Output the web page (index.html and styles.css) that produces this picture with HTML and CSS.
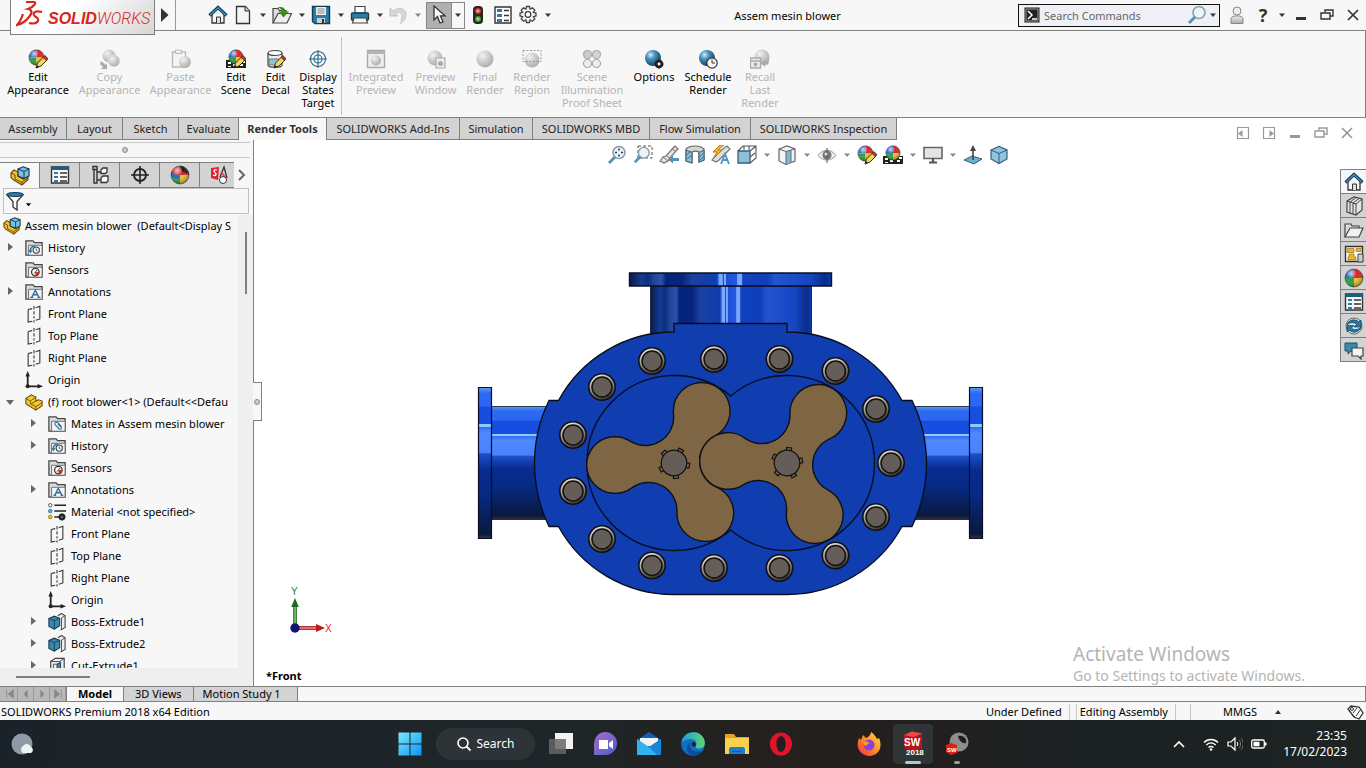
FILE: index.html
```html
<!DOCTYPE html>
<html lang="en">
<head>
<meta charset="utf-8">
<title>Assem mesin blower</title>
<link rel="stylesheet" href="styles.css">
</head>
<body>
<svg class="defs" aria-hidden="true">
  <defs>
    <radialGradient id="gloss" cx=".35" cy=".25" r=".8"><stop offset="0" stop-color="#fff" stop-opacity=".75"/><stop offset=".4" stop-color="#fff" stop-opacity="0"/><stop offset="1" stop-color="#000" stop-opacity=".45"/></radialGradient>
    <radialGradient id="blueball" cx=".35" cy=".3" r=".75"><stop offset="0" stop-color="#d6eef8"/><stop offset=".35" stop-color="#4a96bd"/><stop offset="1" stop-color="#0b3a57"/></radialGradient>
    <radialGradient id="greyball" cx=".35" cy=".3" r=".75"><stop offset="0" stop-color="#f2f2f2"/><stop offset=".6" stop-color="#c6c6c6"/><stop offset="1" stop-color="#ababab"/></radialGradient>
    <linearGradient id="person" x1="0" y1="0" x2="0" y2="1"><stop offset="0" stop-color="#eee"/><stop offset="1" stop-color="#aaa"/></linearGradient>
    <linearGradient id="win" x1="0" y1="0" x2="1" y2="1"><stop offset="0" stop-color="#7be8fb"/><stop offset="1" stop-color="#0a95f5"/></linearGradient>
    <linearGradient id="edge" x1="0" y1="0" x2="1" y2="0"><stop offset="0" stop-color="#1b9de2"/><stop offset="1" stop-color="#5fd668"/></linearGradient>
    <linearGradient id="ff" x1="1" y1="0" x2="0" y2="1"><stop offset="0" stop-color="#ffe14a"/><stop offset=".5" stop-color="#ff8a1e"/><stop offset="1" stop-color="#f5264f"/></linearGradient>
    <linearGradient id="chat" x1="0" y1="0" x2="1" y2="1"><stop offset="0" stop-color="#a76bc4"/><stop offset="1" stop-color="#4a5fd0"/></linearGradient>
  </defs>
  <symbol id="caret" viewBox="0 0 8 8"><path d="M1 2.500h6L4 6z" fill="currentColor"/></symbol>
  <symbol id="home" viewBox="0 0 20 20"><path d="M4 9v9h12V9l-6-6z" fill="#f7f7f7" stroke="#333" stroke-width="1.300"/><path d="M8.500 18v-6h4v6" fill="#ddd" stroke="#333"/><path d="M1.500 10.500 10 2.500l8.500 8" fill="none" stroke="#0f3a55" stroke-width="3.200"/><path d="M2 10.200 10 2.700l8 7.500" fill="none" stroke="#3f8fb5" stroke-width="1.400"/></symbol>
  <symbol id="doc" viewBox="0 0 20 20"><path d="M3.500 1.500h9l4 4.500v12.500h-13z" fill="#f4f4f4" stroke="#333" stroke-width="1.300"/><path d="M12 1.500V6h4.500" fill="#ccc" stroke="#333"/></symbol>
  <symbol id="open" viewBox="0 0 20 20"><path d="M1 18V3.500h5l1.500 2H14V9" fill="#ddd" stroke="#444" stroke-width="1.200"/><path d="M1 18 6 8.500h13.500L15 18z" fill="#eee" stroke="#444" stroke-width="1.200"/><path d="M5 2.500c5-1.500 8 0 8.500 4H17l-5.500 6-5-6h3.200C9.500 4 8 2.800 5 2.500z" fill="#3a8c18"/></symbol>
  <symbol id="save" viewBox="0 0 20 20"><path d="M1.500 1.500h17v17H4l-2.500-2z" fill="#2c7da4" stroke="#133c52" stroke-width="1.400"/><path d="M5 2h10v8H5z" fill="#eee"/><path d="M6.500 4h7M6.500 6h7M6.500 8h7" stroke="#888"/><path d="M6 13h8v5H6z" fill="#ccc"/><path d="M11 14h2v4h-2z" fill="#333"/></symbol>
  <symbol id="print" viewBox="0 0 20 20"><path d="M5 8V1.500h10V8z" fill="#fff" stroke="#444" stroke-width="1.200"/><rect x="1.500" y="8" width="17" height="7" rx="1" fill="#2c7da4" stroke="#133c52" stroke-width="1.400"/><path d="M4 13h12l1.500 5h-15z" fill="#f5f5f5" stroke="#444" stroke-width="1.200"/></symbol>
  <symbol id="undo" viewBox="0 0 20 20"><path d="M1 3v8h8L6.500 8.500c4-2.500 8 0 6 5.500-.5 1.500 0 3-1 4.500C18 15 20 4 11 3.500c-3 0-5 1-7 2.500z" fill="#d8d8d8" stroke="#bbb" stroke-width=".8"/></symbol>
  <symbol id="cursor" viewBox="0 0 20 20"><path d="M5 1v14l3.500-3.500L11 18l3-1.200-2.600-6H16z" fill="#fff" stroke="#333" stroke-width="1.300"/></symbol>
  <symbol id="traffic" viewBox="0 0 20 20"><rect x="5" y="1" width="10" height="18" rx="4" fill="#262626"/><circle cx="10" cy="6" r="3" fill="#e22b1b"/><circle cx="10" cy="14" r="3" fill="#3d9a2c"/><path d="M10 4v4M8 6h4M10 12v4M8 14h4" stroke="#fff" stroke-opacity=".6"/></symbol>
  <symbol id="list" viewBox="0 0 20 20"><path d="M2 2h16v16H2z" fill="#fff" stroke="#333" stroke-width="1.400"/><path d="M4 4h5v3H4zM4 9h5v3H4zM4 14h5v3H4z" fill="#2c7da4"/><path d="M11 5.500h5M11 10.500h5M11 15.500h5" stroke="#333" stroke-width="1.300"/></symbol>
  <symbol id="listwin" viewBox="0 0 20 20"><path d="M1.500 2h17v16h-17z" fill="#f8f8f8" stroke="#333" stroke-width="1.400"/><path d="M1 1.500h18V5H1z" fill="#1d5d7e"/><path d="M4 7h4v2H4zM4 11h4v2H4zM4 15h4v2H4z" fill="#2c7da4"/><path d="M10 8h7M10 12h7M10 16h7" stroke="#333" stroke-width="1.300"/></symbol>
  <symbol id="gear" viewBox="0 0 20 20"><path d="M8.500 1.500h3l.6 2.600 2.400-1.400 2.300 2.300-1.400 2.400 2.600.6v3l-2.600.6 1.400 2.400-2.300 2.300-2.400-1.400-.6 2.600h-3l-.6-2.600-2.400 1.400-2.300-2.300 1.400-2.400-2.600-.6V8l2.600-.6-1.400-2.400 2.300-2.300 2.400 1.400z" fill="#f3f3f3" stroke="#444" stroke-width="1.300"/><circle cx="10" cy="9.500" r="2.800" fill="#fff" stroke="#444" stroke-width="1.300"/></symbol>
  <symbol id="ball" viewBox="0 0 20 20"><path d="M10 10H1A9 9 0 0 1 10 1z" fill="#2a62c9"/><path d="M10 10V1a9 9 0 0 1 9 9z" fill="#dc1f1f"/><path d="M10 10H1a9 9 0 0 0 9 9z" fill="#24a13b"/><path d="M10 10h9a9 9 0 0 1-9 9z" fill="#efc12d"/><circle cx="10" cy="10" r="9" fill="url(#gloss)" stroke="#333" stroke-width=".6"/></symbol>
  <symbol id="ball2" viewBox="0 0 20 20"><path d="M10 10H1a9 9 0 0 1 9-9z" fill="#dc1f1f"/><path d="M10 10H1a9 9 0 0 0 9 9z" fill="#24a13b"/><path d="M1.500 8c2 1 5 2 8.500 1.500V14C6 14 3 13 1 11z" fill="#2a62c9"/><path d="M10 10h9a9 9 0 0 1-9 9z" fill="#efc12d"/><path d="M10 10V1a9 9 0 0 1 9 9z" fill="#dc1f1f"/><path d="M10 1c4 0 8 3 9 8l-4-1c-3-1-5-4-5-7z" fill="#1b1b1b"/><circle cx="10" cy="10" r="9" fill="url(#gloss)" stroke="#333" stroke-width=".6"/></symbol>
  <symbol id="pencil" viewBox="0 0 20 20"><path d="m8 19 1.500-5L16 7.500l3.500 3L13 17z" fill="#f6d65a" stroke="#3c2c12" stroke-width="1"/><path d="m15 8.500 1.800-2 3 2.800-1.500 2z" fill="#c0392b" stroke="#3c2c12" stroke-width=".8"/><path d="m8 19 1-3 2 2z" fill="#222"/></symbol>
  <symbol id="editball" viewBox="0 0 20 20"><use href="#ball" width="17" height="17"/><use href="#pencil" width="20" height="20"/></symbol>
  <symbol id="scene" viewBox="0 0 20 20"><path d="M0 11h20v8H0z" fill="#222"/><path d="M2 13h3v2H2zM7 15h3v2H7zM14 15h3v2h-3zM2 17h3v1H2zM16 12h3v2h-3z" fill="#fff"/><use href="#ball" x="2" width="16" height="16"/></symbol>
  <symbol id="editscene" viewBox="0 0 20 20"><use href="#scene" width="20" height="20"/><use href="#pencil" width="20" height="20"/></symbol>
  <symbol id="decal" viewBox="0 0 20 20"><path d="M2 4v12c0 3 14 3 14 0V4" fill="#eee" stroke="#444" stroke-width="1.200"/><ellipse cx="9" cy="4" rx="7" ry="2.500" fill="#fff" stroke="#444" stroke-width="1.200"/><path d="M3 10h10v6H3z" fill="#8fc4de" stroke="#777"/><use href="#pencil" width="20" height="20"/></symbol>
  <symbol id="target" viewBox="0 0 20 20" ><g fill="none" stroke="#27658a" stroke-width="1.100"><circle cx="10" cy="10" r="7.500"/><circle cx="10" cy="10" r="4"/><path d="M10 1v18M1 10h18"/></g></symbol>
  <symbol id="copyg" viewBox="0 0 20 20"><circle cx="9" cy="7" r="6.500" fill="url(#greyball)"/><circle cx="14" cy="12" r="5.800" fill="url(#greyball)" stroke="#ddd"/><path d="m1 12 5 4 1-2v6H1l2-2-3-3z" fill="#aaa"/></symbol>
  <symbol id="pasteg" viewBox="0 0 20 20"><path d="M1.500 3h13v15h-13z" fill="#f4f4f4" stroke="#bbb" stroke-width="1.400"/><path d="M4.500 1h6v3.500h-6z" fill="#eee" stroke="#bbb"/><circle cx="14" cy="13" r="6" fill="url(#greyball)"/></symbol>
  <symbol id="ipg" viewBox="0 0 20 20"><path d="M1.500 1.500h17v17h-17z" fill="#eee" stroke="#aaa" stroke-width="1.400"/><path d="M1 2h18v3H1z" fill="#b5b5b5"/><circle cx="10" cy="11.500" r="5" fill="url(#greyball)"/></symbol>
  <symbol id="pwg" viewBox="0 0 20 20"><circle cx="9" cy="9" r="7.500" fill="url(#greyball)"/><path d="M10 9h9v10h-9z" fill="#eee" stroke="#aaa" stroke-width="1.200"/><circle cx="14.500" cy="14.500" r="2.500" fill="#aaa"/></symbol>
  <symbol id="frg" viewBox="0 0 20 20"><circle cx="10" cy="10" r="8.500" fill="url(#greyball)"/></symbol>
  <symbol id="rrg" viewBox="0 0 20 20"><circle cx="10" cy="11" r="7.500" fill="url(#greyball)"/><path d="M1 1.500h18v11H1z" fill="none" stroke="#999" stroke-dasharray="2 1.500"/></symbol>
  <symbol id="sig" viewBox="0 0 20 20"><g fill="#e2e2e2" stroke="#aaa" stroke-width="1.200"><circle cx="5.500" cy="5.500" r="4" fill="#ccc"/><circle cx="14.500" cy="5.500" r="4" fill="#d4d4d4"/><circle cx="5.500" cy="14.500" r="4" fill="#eee"/><circle cx="14.500" cy="14.500" r="4" fill="#eee"/></g></symbol>
  <symbol id="optb" viewBox="0 0 20 20"><circle cx="9" cy="9" r="8" fill="url(#blueball)"/><circle cx="15" cy="15" r="3.200" fill="none" stroke="#222" stroke-width="2.400"/><path d="M15 10.500v9M10.500 15h9M12 12l6 6M18 12l-6 6" stroke="#222" stroke-width="1.200"/><circle cx="15" cy="15" r="1.400" fill="#fff"/></symbol>
  <symbol id="schb" viewBox="0 0 20 20"><circle cx="9" cy="9" r="8" fill="url(#blueball)"/><circle cx="14" cy="14" r="5.200" fill="#f7f7f7" stroke="#333" stroke-width="1.200"/><path d="M14 10.500V14h3" fill="none" stroke="#333"/></symbol>
  <symbol id="rlg" viewBox="0 0 20 20"><circle cx="12" cy="8" r="7.500" fill="url(#greyball)"/><path d="M.5 9h10v10H.5zM.5 12h10" fill="#eee" stroke="#aaa" stroke-width="1.300"/><circle cx="5.500" cy="15.500" r="2" fill="#aaa"/><path d="m11 14 4-3v2l4-2c0 4-1 5-4 5v2z" fill="#aaa"/></symbol>
  <symbol id="asm" viewBox="0 0 20 20"><path d="M1 7 4 4l4 2v4l5 3 5-2.500v3L12 19 3 13.500 1 11z" fill="#f2c230" stroke="#6b4c05" stroke-width="1.200"/><path d="m1 7 4 2v4l7 3.500V19M12 16l6-4" fill="none" stroke="#6b4c05"/><path d="m8 3 5-2.200L19 3v7l-5 2.500L8 10z" fill="#7fbfdf" stroke="#133c52" stroke-width="1.200"/><path d="m8 3 6 2.500L19 3M14 5.500v7" fill="none" stroke="#133c52"/></symbol>
  <symbol id="part" viewBox="0 0 20 20"><path d="m1 6 6-4 5 2.500V9l3-1.500L19 9v5l-7 5-11-7z" fill="#f5c93a" stroke="#6b4c05" stroke-width="1.200"/><path d="m1 6 5 3v3l6 3 7-4M12 15v4M6 9l6-4.500M7 12l5-3" fill="none" stroke="#6b4c05"/></symbol>
  <symbol id="folder" viewBox="0 0 20 20"><path d="M1 18V2h8l1.500 2H19v14z" fill="#dcdcdc" stroke="#444" stroke-width="1.400"/><path d="M4 7h15v11H4z" fill="#f5f5f5" stroke="#666"/></symbol>
  <symbol id="hist" viewBox="0 0 20 20"><use href="#folder" width="20" height="20"/><circle cx="12.500" cy="12.300" r="3.500" fill="#fff" stroke="#333" stroke-width="1.200"/><path d="M12.500 10.500v2l1.500 1" fill="none" stroke="#333"/><path d="M6 13c0-3.500 2-5 5-5" fill="none" stroke="#2c7da4" stroke-width="1.600"/><path d="m3.500 12 5 .5-2.500 3.500z" fill="#2c7da4"/></symbol>
  <symbol id="sens" viewBox="0 0 20 20"><use href="#folder" width="20" height="20"/><circle cx="11.500" cy="12.300" r="4.200" fill="#fff" stroke="#333" stroke-width="1.400"/><path d="M11.500 12.300h4a4 4 0 0 1-4 4z" fill="#d9301f"/><path d="m10 14 3.500-4" stroke="#333"/></symbol>
  <symbol id="anno" viewBox="0 0 20 20"><use href="#folder" width="20" height="20"/><path d="m7.500 16 4-8 4 8M9 13h5M6 16h3M14 16h3" fill="none" stroke="#2a719b" stroke-width="1.500"/></symbol>
  <symbol id="mates" viewBox="0 0 20 20"><use href="#folder" width="20" height="20"/><path d="m15 13-4-4.500c-2-1.500-4.500.5-3 2.500l4.500 4.500c2 1 3-.8 2-2L11 10" fill="none" stroke="#2a719b" stroke-width="1.200"/></symbol>
  <symbol id="plane" viewBox="0 0 20 20"><path d="M3.500 5 8 4M12 3l4.500-1.500v14L12 17M8 18l-4.500 1V5M10 1v4M10 7v3.500M10 12.500V15M10 17v2.500" fill="none" stroke="#333" stroke-width="1.200"/></symbol>
  <symbol id="orig" viewBox="0 0 20 20"><path d="M3 4v13h13" fill="none" stroke="#222" stroke-width="2"/><path d="m3 0 2.500 6h-5zM20 17l-6-2.500v5z" fill="#222"/><circle cx="3" cy="17" r="2.300" fill="#222"/></symbol>
  <symbol id="mat" viewBox="0 0 20 20"><path d="M7 2.500h13M7 9h13M7 15.500h6" stroke="#222" stroke-width="1.700"/><circle cx="2.500" cy="2.500" r="1.900" fill="#fff" stroke="#444"/><circle cx="2.500" cy="9" r="2" fill="#58b0d6" stroke="#2c7da4"/><circle cx="2.500" cy="15.500" r="2" fill="#f2c230" stroke="#a67c00"/><circle cx="15.500" cy="15.500" r="2.600" fill="#fff" stroke="#222" stroke-width="2.300"/><path d="M15.500 11.500v8M11.500 15.500h8" stroke="#222" stroke-width="1"/></symbol>
  <symbol id="boss" viewBox="0 0 20 20"><path d="m11 3 4-2.500L19 3v13l-5 3" fill="#eee" stroke="#444" stroke-width="1.200"/><path d="M15 5.500 19 3M15 5.500V18" fill="none" stroke="#444"/><path d="m1 6 6-2.500L13 6v8l-6 4-6-3z" fill="#3b89ae" stroke="#133c52" stroke-width="1.200"/><path d="m1 6 6 2.500L13 6M7 8.500V18" fill="none" stroke="#133c52"/></symbol>
  <symbol id="cut" viewBox="0 0 20 20"><path d="m3 5 5-3.500h10V15l-5 4H3z" fill="#eee" stroke="#444" stroke-width="1.300"/><path d="M3 5h10v14M13 5l5-3.500M6 8h5v8H6z" fill="none" stroke="#444"/><path d="m10 8 4-2v8l-4 2z" fill="#3b89ae" stroke="#133c52"/></symbol>
  <symbol id="config" viewBox="0 0 20 20"><path d="M3 1.500h4v3H3zM4 4.500V18h3V1.500M7 7h4M7 15h4" fill="none" stroke="#333" stroke-width="1.400"/><path d="m11 5 2-2h4v4l-1.500 1.500H11zM11 13l2-2h5v5l-1.500 1.500H11z" fill="#fff" stroke="#333" stroke-width="1.300"/></symbol>
  <symbol id="cross" viewBox="0 0 20 20"><circle cx="10" cy="10" r="6" fill="none" stroke="#222" stroke-width="1.800"/><path d="M10 1v18M1 10h18" stroke="#222" stroke-width="1.600"/></symbol>
  <symbol id="simx" viewBox="0 0 20 20"><path d="m2 3 8-1-1 13-7-2z" fill="#e3202b"/><path d="M8 5C5 4 4 6 6 7.500s1 4-2 2.500" fill="none" stroke="#fff" stroke-width="1.300"/><path d="m11 12 4-10 3 11" fill="none" stroke="#333" stroke-width="1.300"/><circle cx="14" cy="15" r="3.500" fill="#fff" stroke="#333"/><path d="m12 7 5 6" stroke="#d33" stroke-width="1.300"/></symbol>
  <symbol id="funnel" viewBox="0 0 20 20"><path d="M2 4h16l-6 6.500V19l-4-3v-5.500z" fill="#fff" stroke="#333" stroke-width="1.300"/><ellipse cx="10" cy="3.500" rx="8.500" ry="2" fill="#2c7da4" stroke="#133c52"/></symbol>
  <symbol id="mag" viewBox="0 0 20 20"><circle cx="12" cy="7.500" r="6" fill="#eaf4fa" stroke="#8a9dab" stroke-width="1.600"/><path d="m8 12-6 6" stroke="#5b93b4" stroke-width="3"/></symbol>
  <symbol id="zfit" viewBox="0 0 20 20"><use href="#mag" width="20" height="20"/><path d="M12 3.500v2M12 9.500v2M8 7.500h2M14 7.500h2" stroke="#333" stroke-width="1.500"/></symbol>
  <symbol id="zarea" viewBox="0 0 20 20"><path d="M5 1h14v12H5z" fill="none" stroke="#555" stroke-dasharray="3 2"/><use href="#mag" y="1" width="18" height="18"/></symbol>
  <symbol id="prev" viewBox="0 0 20 20"><path d="m1 16 3-4 3-1 7-8 2-2 3 3-2 2-7 8-1 2-4 2z" fill="#e2e2e2" stroke="#777" stroke-width="1.200"/><path d="m4 12 5 4M7 10l4 3.500M13 3.500l3.500 3" stroke="#777"/><path d="M9 14.500l5-4v2.500h6v3h-6v2.500z" fill="#4e94bb"/></symbol>
  <symbol id="section" viewBox="0 0 20 20"><path d="M1 4c4-4 14-4 18 0v11l-5 2V7c-2-1-5-1-7 0v11l-6-2z" fill="#d6d6d6" stroke="#666" stroke-width="1.200"/><path d="m1 5 6 2.500V18l-6-2zM14 7.500 19 5v10l-5 2z" fill="#8fc0d9" stroke="#34617c"/><path d="m1.500 10 4-3.500M2 14l5-4M14.500 12l4-4M14.500 15.500l4-4" stroke="#34617c"/></symbol>
  <symbol id="dyn" viewBox="0 0 20 20"><path d="M1 15 4 11 13 3l3-2 3 3-2 2-9 9-3 2z" fill="#ddd" stroke="#777" stroke-width="1.200"/><path d="M9 0 2 7h4l-3 6 8-8H7l6-5z" fill="#f3b63a" stroke="#b9770e"/><path d="m10 19 4-10 4 10M11.500 15h5" fill="none" stroke="#4e94bb" stroke-width="1.800"/></symbol>
  <symbol id="orient" viewBox="0 0 20 20"><path d="M1 6h12v12H1z" fill="#8fc0d9" stroke="#34617c" stroke-width="1.300"/><path d="m1 6 5-5h13v12l-6 5M13 6l6-5M7 1v4M12 1v4M18 8l-5 4" fill="none" stroke="#555" stroke-width="1.100"/></symbol>
  <symbol id="disp" viewBox="0 0 20 20"><path d="m2 4 8-3 8 3v12l-9 3.500L2 16z" fill="#eef4f7" stroke="#666" stroke-width="1.200"/><path d="m9 6.500 5-1.500v12.500l-5 2z" fill="#7fb6d2"/><path d="m2 4 7 2.500L18 4M9 6.500v13M14 5v12.500" fill="none" stroke="#667"/></symbol>
  <symbol id="eye" viewBox="0 0 20 20"><path d="M1 10.500c5-7 13-7 18 0-5 6-13 6-18 0z" fill="#eee" stroke="#999"/><circle cx="10" cy="10" r="4.500" fill="#777"/><path d="M10 3v15" stroke="#555"/><circle cx="9" cy="9" r="1.500" fill="#ddd"/></symbol>
  <symbol id="monitor" viewBox="0 0 20 20"><path d="M1 2.500h18v11H1z" fill="#e4e4e4" stroke="#666" stroke-width="1.600"/><path d="M10 13v4M6 17.500h8" stroke="#555" stroke-width="2.200"/></symbol>
  <symbol id="normal" viewBox="0 0 20 20"><path d="m1 15 8-4 10 3-8 5z" fill="#6fadd0" stroke="#34617c"/><path d="M10 15V5" stroke="#444" stroke-width="1.600"/><path d="m10 0 3 6H7z" fill="#444"/></symbol>
  <symbol id="cube" viewBox="0 0 20 20"><path d="m2 5 8-3.500L18 5v9l-8 4.500L2 14z" fill="#8fc3de" stroke="#34617c" stroke-width="1.200"/><path d="m2 5 8 3.500L18 5M10 8.500v10" fill="none" stroke="#34617c"/></symbol>
  <symbol id="books" viewBox="0 0 20 20"><path d="m3 5 7-4 8 2v11l-6 5-9-3z" fill="#e6e6e6" stroke="#444" stroke-width="1.200"/><path d="m3 5 9 3v11M12 8l6-5M6 6v11M9 7v11M6 6l6-4.300M9 7l6-4.500" fill="none" stroke="#444"/></symbol>
  <symbol id="fold" viewBox="0 0 20 20"><path d="M1 17V4h6l1 2h7v3" fill="#ddd" stroke="#444" stroke-width="1.200"/><path d="m1 17 5-9h13l-4 9z" fill="#f1f1f1" stroke="#444" stroke-width="1.200"/></symbol>
  <symbol id="palette" viewBox="0 0 20 20"><path d="M1.500 2.500h17v15h-17z" fill="#fff" stroke="#333" stroke-width="1.400"/><path d="M3 4.500h7v4H3zM12 4.500h5v3h-5zM5 10h5v3h2v3H4v-3h1z" fill="#eeb422" stroke="#8a6100" stroke-width=".6"/><path d="M14 10h5v8h-5z" fill="#ccc" stroke="#444"/></symbol>
  <symbol id="sync" viewBox="0 0 20 20"><circle cx="10" cy="10" r="8" fill="#dce9ef" stroke="#666"/><path d="M3 9c1-5 8-7 12-3l2-2v7h-7l2.500-2.500C10 6 6 6 3 9zM17 11c-1 5-8 7-12 3l-2 2V9.500h7L7.500 12c2.500 2.500 6.500 2 9.500-1z" fill="#2877a5" stroke="#123d57" stroke-width=".7"/></symbol>
  <symbol id="talk" viewBox="0 0 20 20"><path d="M1 3h12v8H7l-3 3v-3H1z" fill="#3b89ae" stroke="#1d4f6a"/><path d="M8 8h11v8h-2v3l-3-3H8z" fill="#f5f5f5" stroke="#444" stroke-width="1.200"/></symbol>
  <symbol id="min" viewBox="0 0 14 14"><path d="M2 10.500h10" stroke="currentColor" stroke-width="3"/></symbol>
  <symbol id="restore" viewBox="0 0 14 14"><path d="M5 4V2h8v6h-3M1 5h9v6H1z" fill="none" stroke="currentColor" stroke-width="1.400"/></symbol>
  <symbol id="close" viewBox="0 0 14 14"><path d="m2 2 10 10M12 2 2 12" stroke="currentColor" stroke-width="1.700"/></symbol>
  <symbol id="padl" viewBox="0 0 14 14"><path d="M1.500 1.500h11v11h-11z" fill="none" stroke="currentColor" stroke-width="1.200"/><path d="M2 7.500 6.500 4v7z" fill="currentColor"/></symbol>
  <symbol id="padr" viewBox="0 0 14 14"><path d="M1.500 1.500h11v11h-11z" fill="none" stroke="currentColor" stroke-width="1.200"/><path d="M12 7.500 7.500 4v7z" fill="currentColor"/></symbol>
</svg>

<header class="titlebar">
  <div class="brand">
    <svg class="brand-mark" viewBox="0 0 28 28"><g fill="none" stroke="#d8261c" stroke-width="2.200"><path d="M10 2h8c3 0 0 5-6 7 5 1 4 4 1 8-3 4-8 7-12 8 3-3 5-8 6-11"/><path d="M26 12c-8-2-11 2-6 5s1 8-7 6"/></g></svg>
    <span class="brand-name"><b>SOLID</b><i>WORKS</i></span>
  </div>
  <button class="brand-arrow" aria-label="Expand menu"><svg viewBox="0 0 8 14"><path d="M0 0v14l7.500-7z" fill="#333"/></svg></button>
  <nav class="quick" aria-label="Quick access">
    <button class="ic gap-r" aria-label="Home"><svg><use href="#home"/></svg></button>
    <button class="ic" aria-label="New"><svg><use href="#doc"/></svg></button><button class="drop" aria-label="New options"><svg><use href="#caret"/></svg></button>
    <button class="ic" aria-label="Open"><svg><use href="#open"/></svg></button><button class="drop" aria-label="Open options"><svg><use href="#caret"/></svg></button>
    <button class="ic" aria-label="Save"><svg><use href="#save"/></svg></button><button class="drop" aria-label="Save options"><svg><use href="#caret"/></svg></button>
    <button class="ic" aria-label="Print"><svg><use href="#print"/></svg></button><button class="drop" aria-label="Print options"><svg><use href="#caret"/></svg></button>
    <button class="ic" aria-label="Undo"><svg><use href="#undo"/></svg></button><button class="drop dim" aria-label="Undo options"><svg><use href="#caret"/></svg></button>
    <span class="picker"><button class="pick" aria-label="Select"><svg><use href="#cursor"/></svg></button><button class="pickdrop" aria-label="Select options"><svg><use href="#caret"/></svg></button></span>
    <button class="ic gap-r" aria-label="Rebuild"><svg><use href="#traffic"/></svg></button>
    <button class="ic gap-r" aria-label="File properties"><svg><use href="#list"/></svg></button>
    <button class="ic" aria-label="Settings"><svg><use href="#gear"/></svg></button><button class="drop" aria-label="Settings options"><svg><use href="#caret"/></svg></button>
  </nav>
  <h1 class="doc-title">Assem mesin blower</h1>
  <form class="search">
    <svg class="prompt" viewBox="0 0 16 16"><path d="M.5.5h15v15H.5z" fill="#222"/><path d="M2 2h12v12H2z" fill="none" stroke="#999"/><path d="m4 4 4 4-4 4M8 12h5" fill="none" stroke="#fff" stroke-width="1.500"/></svg>
    <input type="text" placeholder="Search Commands" aria-label="Search Commands">
    <button class="ic" type="button" aria-label="Search"><svg><use href="#mag"/></svg></button>
    <button class="tiny" type="button" aria-label="Search options"><svg><use href="#caret"/></svg></button>
  </form>
  <div class="winctl">
    <button class="cell" aria-label="Account"><svg class="tall" viewBox="0 0 14 18"><path d="M1 17.500v-5C1 9 13 9 13 12.500v5z" fill="url(#person)" stroke="#888"/><circle cx="7" cy="5" r="4" fill="#eee" stroke="#888"/></svg></button>
    <button class="cell help" aria-label="Help">?</button>
    <button class="tiny" aria-label="Help options"><svg><use href="#caret"/></svg></button>
    <button class="cell" aria-label="Minimize"><svg><use href="#min"/></svg></button>
    <button class="cell" aria-label="Restore"><svg><use href="#restore"/></svg></button>
    <button class="cell" aria-label="Close"><svg><use href="#close"/></svg></button>
  </div>
</header>

<section class="ribbon" aria-label="Render Tools">
  <button class="cmd"><svg><use href="#editball"/></svg><span>Edit<br>Appearance</span></button>
  <button class="cmd" disabled><svg><use href="#copyg"/></svg><span>Copy<br>Appearance</span></button>
  <button class="cmd" disabled><svg><use href="#pasteg"/></svg><span>Paste<br>Appearance</span></button>
  <button class="cmd"><svg><use href="#editscene"/></svg><span>Edit<br>Scene</span></button>
  <button class="cmd"><svg><use href="#decal"/></svg><span>Edit<br>Decal</span></button>
  <button class="cmd"><svg><use href="#target"/></svg><span>Display<br>States<br>Target</span></button>
  <i class="rule"></i>
  <button class="cmd" disabled><svg><use href="#ipg"/></svg><span>Integrated<br>Preview</span></button>
  <button class="cmd" disabled><svg><use href="#pwg"/></svg><span>Preview<br>Window</span></button>
  <button class="cmd" disabled><svg><use href="#frg"/></svg><span>Final<br>Render</span></button>
  <button class="cmd" disabled><svg><use href="#rrg"/></svg><span>Render<br>Region</span></button>
  <button class="cmd" disabled><svg><use href="#sig"/></svg><span>Scene<br>Illumination<br>Proof Sheet</span></button>
  <button class="cmd"><svg><use href="#optb"/></svg><span>Options</span></button>
  <button class="cmd"><svg><use href="#schb"/></svg><span>Schedule<br>Render</span></button>
  <button class="cmd" disabled><svg><use href="#rlg"/></svg><span>Recall<br>Last<br>Render</span></button>
</section>

<div class="tabrow">
  <nav class="tabs" aria-label="Command manager">
    <button>Assembly</button><button>Layout</button><button>Sketch</button><button>Evaluate</button><button class="on">Render Tools</button><button>SOLIDWORKS Add-Ins</button><button>Simulation</button><button>SOLIDWORKS MBD</button><button>Flow Simulation</button><button>SOLIDWORKS Inspection</button>
  </nav>
  <div class="docctl">
    <button class="cell" aria-label="Previous pane"><svg><use href="#padl"/></svg></button>
    <button class="cell" aria-label="Next pane"><svg><use href="#padr"/></svg></button>
    <button class="cell" aria-label="Minimize document"><svg><use href="#min"/></svg></button>
    <button class="cell" aria-label="Restore document"><svg><use href="#restore"/></svg></button>
    <button class="cell" aria-label="Close document"><svg><use href="#close"/></svg></button>
  </div>
</div>

<main class="work">
  <aside class="panel">
    <div class="grip"><i></i></div>
    <div class="ptabs">
      <button class="on" aria-label="Feature tree"><svg><use href="#asm"/></svg></button>
      <button aria-label="Properties"><svg><use href="#listwin"/></svg></button>
      <button aria-label="Configurations"><svg><use href="#config"/></svg></button>
      <button aria-label="Dimensions"><svg><use href="#cross"/></svg></button>
      <button aria-label="Display"><svg><use href="#ball2"/></svg></button>
      <button class="last" aria-label="Simulation"><svg><use href="#simx"/></svg></button>
      <button class="more" aria-label="More"><svg viewBox="0 0 10 14"><path d="m2 2 5 5-5 5" fill="none" stroke="#666" stroke-width="2"/></svg></button>
    </div>
    <button class="filter" aria-label="Filter"><svg class="fn"><use href="#funnel"/></svg><svg class="ct"><use href="#caret"/></svg></button>
    <div class="treebox">
      <ul class="tree">
        <li class="l0"><svg><use href="#asm"/></svg>Assem mesin blower&nbsp; (Default&lt;Display S</li>
        <li class="l1 has"><svg><use href="#hist"/></svg>History</li>
        <li class="l1"><svg><use href="#sens"/></svg>Sensors</li>
        <li class="l1 has"><svg><use href="#anno"/></svg>Annotations</li>
        <li class="l1"><svg><use href="#plane"/></svg>Front Plane</li>
        <li class="l1"><svg><use href="#plane"/></svg>Top Plane</li>
        <li class="l1"><svg><use href="#plane"/></svg>Right Plane</li>
        <li class="l1"><svg><use href="#orig"/></svg>Origin</li>
        <li class="l1 open"><svg><use href="#part"/></svg>(f) root blower&lt;1&gt; (Default&lt;&lt;Defau</li>
        <li class="l2 has"><svg><use href="#mates"/></svg>Mates in Assem mesin blower</li>
        <li class="l2 has"><svg><use href="#hist"/></svg>History</li>
        <li class="l2"><svg><use href="#sens"/></svg>Sensors</li>
        <li class="l2 has"><svg><use href="#anno"/></svg>Annotations</li>
        <li class="l2"><svg><use href="#mat"/></svg>Material &lt;not specified&gt;</li>
        <li class="l2"><svg><use href="#plane"/></svg>Front Plane</li>
        <li class="l2"><svg><use href="#plane"/></svg>Top Plane</li>
        <li class="l2"><svg><use href="#plane"/></svg>Right Plane</li>
        <li class="l2"><svg><use href="#orig"/></svg>Origin</li>
        <li class="l2 has"><svg><use href="#boss"/></svg>Boss-Extrude1</li>
        <li class="l2 has"><svg><use href="#boss"/></svg>Boss-Extrude2</li>
        <li class="l2 has"><svg><use href="#cut"/></svg>Cut-Extrude1</li>
      </ul>
      <div class="vbar"><i></i></div>
    </div>
    <div class="hbar"><i></i></div>
    <button class="handle" aria-label="Collapse panel"><i></i></button>
  </aside>

  <section class="viewport" aria-label="Model view">
    <svg class="model" viewBox="254 140 1112 546">
      <defs>
        <linearGradient id="gv" x1="0" y1="0" x2="0" y2="1">
          <stop offset="0" stop-color="#5d9cf0"/><stop offset=".04" stop-color="#2c68f0"/><stop offset=".12" stop-color="#2b67f2"/><stop offset=".13" stop-color="#164ee0"/><stop offset=".24" stop-color="#164ee0"/><stop offset=".24" stop-color="#8fcaff"/><stop offset=".26" stop-color="#8fcaff"/><stop offset=".26" stop-color="#2e6af5"/><stop offset=".3" stop-color="#5088ff"/><stop offset=".43" stop-color="#4a82fa"/><stop offset=".44" stop-color="#1c50c8"/><stop offset=".55" stop-color="#082b8e"/><stop offset=".7" stop-color="#062a85"/><stop offset=".85" stop-color="#08205c"/><stop offset=".97" stop-color="#0a1a3c"/><stop offset="1" stop-color="#334"/>
        </linearGradient>
        <linearGradient id="gh" x1="0" y1="0" x2="1" y2="0">
          <stop offset="0" stop-color="#0b1a44"/><stop offset=".06" stop-color="#143c95"/><stop offset=".09" stop-color="#0a2f80"/><stop offset=".13" stop-color="#27489c"/><stop offset=".16" stop-color="#2c50ac"/><stop offset=".18" stop-color="#04237a"/><stop offset=".26" stop-color="#06267c"/><stop offset=".31" stop-color="#1b42a2"/><stop offset=".43" stop-color="#0f3bab"/><stop offset=".44" stop-color="#2c68f0"/><stop offset=".445" stop-color="#7ba8ff"/><stop offset=".46" stop-color="#7ba8ff"/><stop offset=".462" stop-color="#1c4fd8"/><stop offset=".468" stop-color="#1c4fd8"/><stop offset=".47" stop-color="#7ba8ff"/><stop offset=".478" stop-color="#7ba8ff"/><stop offset=".48" stop-color="#1c4fd8"/><stop offset=".53" stop-color="#2459e0"/><stop offset=".535" stop-color="#7ba8ff"/><stop offset=".555" stop-color="#7ba8ff"/><stop offset=".56" stop-color="#1242c0"/><stop offset=".68" stop-color="#0f3eb8"/><stop offset=".72" stop-color="#2453d2"/><stop offset=".9" stop-color="#1545c0"/><stop offset=".97" stop-color="#0a2c88"/><stop offset="1" stop-color="#0d3cae"/>
        </linearGradient>
        <linearGradient id="bolt" x1=".3" y1="0" x2=".7" y2="1"><stop offset="0" stop-color="#f4ebe6"/><stop offset=".5" stop-color="#978d87"/><stop offset="1" stop-color="#2f2a27"/></linearGradient>
        <g id="bt"><circle r="13.200" fill="url(#bolt)" stroke="#111" stroke-width="1.600"/><circle r="10" fill="#655e58" stroke="#111" stroke-width="1.500"/></g>
        <path id="rotor" d="M43-23.400A28.350 28.350 0 1 1 43 23.400A28.350 28.350 0 0 0-1.240 48.940A28.350 28.350 0 1 1-41.760 25.540A28.350 28.350 0 0 0-41.760-25.540A28.350 28.350 0 1 1-1.240-48.940A28.350 28.350 0 0 0 43-23.400z" fill="#7e6645" stroke="#111" stroke-width="1.400"/>
        <g id="shaft" stroke="#111" stroke-width="1.200" fill="#7e6645"><path id="key" d="M12-2.500h3.500v5H12z"/><use href="#key" transform="rotate(72)"/><use href="#key" transform="rotate(144)"/><use href="#key" transform="rotate(216)"/><use href="#key" transform="rotate(288)"/><circle r="12.800" fill="#655e58"/></g>
      </defs>
      <g stroke="#0a1024">
        <path d="M491 406.500h60v113h-60zM910 406.500h60v113h-60z" fill="url(#gv)" stroke-width=".8"/>
        <path d="M478.500 387.500h13v151h-13zM969.500 387.500h13v151h-13z" fill="url(#gv)" stroke-width="1.200"/>
        <path d="M650.500 286h161v60h-161z" fill="url(#gh)" stroke-width=".8"/>
        <path d="M629.500 273h202v13h-202z" fill="url(#gh)" stroke-width="1.400"/>
      </g>
      <path d="M674 323.500H787V332A131 131 0 0 1 902 400.500H912A144 144 0 0 1 912 526.500H902A131 131 0 0 1 787 594.500H674A131 131 0 0 1 558.500 526.500H549A144 144 0 0 1 549 400.500H558.500A131 131 0 0 1 674 332z" fill="#103db0" stroke="#080c18" stroke-width="1.300"/>
      <path d="M730.700 396A87.500 87.500 0 1 1 730.700 530A87.500 87.500 0 1 1 730.700 396z" fill="#103db0" stroke="#080c18" stroke-width="1.300"/>
      <use href="#rotor" transform="translate(674 463) rotate(58)"/>
      <use href="#rotor" transform="translate(787 463) rotate(62)"/>
      <use href="#shaft" transform="translate(674 463) rotate(10)"/>
      <use href="#shaft" transform="translate(787 463) rotate(-10)"/>
      <use href="#bt" x="652" y="361"/><use href="#bt" x="714" y="359"/><use href="#bt" x="779.500" y="359"/><use href="#bt" x="835.500" y="371"/><use href="#bt" x="876" y="409"/><use href="#bt" x="891" y="463"/><use href="#bt" x="876" y="517"/><use href="#bt" x="835.500" y="555.500"/><use href="#bt" x="779.500" y="568"/><use href="#bt" x="714" y="568"/><use href="#bt" x="652" y="565.500"/><use href="#bt" x="602" y="539"/><use href="#bt" x="573" y="491"/><use href="#bt" x="573" y="435"/><use href="#bt" x="602" y="387"/>
      <path d="M293.500 606h3v20h-3z" fill="#6ab46a" stroke="#1c6b1c" stroke-width=".8"/><path d="m295 598 3.800 9h-7.600z" fill="#1c6b1c"/>
      <path d="M297 626.500h20v3h-20z" fill="#e86a6a" stroke="#a01515" stroke-width=".8"/><path d="m325 628-9-4v8z" fill="#c01818"/>
      <circle cx="295" cy="628" r="4.700" fill="#141478"/>
      <text x="291" y="595" class="axis" fill="#1a8a1a">Y</text><text x="325" y="632" class="axis" fill="#e02020">X</text>
    </svg>
    <div class="hud">
      <button aria-label="Zoom to fit"><svg><use href="#zfit"/></svg></button>
      <button aria-label="Zoom to area"><svg><use href="#zarea"/></svg></button>
      <button aria-label="Previous view"><svg><use href="#prev"/></svg></button>
      <button aria-label="Section view"><svg><use href="#section"/></svg></button>
      <button aria-label="Annotation views"><svg><use href="#dyn"/></svg></button>
      <button aria-label="View orientation"><svg><use href="#orient"/></svg></button><button class="hd" aria-label="Orientation options"><svg><use href="#caret"/></svg></button>
      <button aria-label="Display style"><svg><use href="#disp"/></svg></button><button class="hd" aria-label="Display options"><svg><use href="#caret"/></svg></button>
      <button aria-label="Hide or show"><svg><use href="#eye"/></svg></button><button class="hd" aria-label="Visibility options"><svg><use href="#caret"/></svg></button>
      <button aria-label="Edit appearance"><svg><use href="#editball"/></svg></button>
      <button aria-label="Apply scene"><svg><use href="#scene"/></svg></button><button class="hd" aria-label="Scene options"><svg><use href="#caret"/></svg></button>
      <button aria-label="View settings"><svg><use href="#monitor"/></svg></button><button class="hd" aria-label="View options"><svg><use href="#caret"/></svg></button>
      <button aria-label="Normal to"><svg><use href="#normal"/></svg></button>
      <button aria-label="Isometric"><svg><use href="#cube"/></svg></button>
    </div>
    <nav class="strip" aria-label="Task pane">
      <button class="on" aria-label="Resources"><svg><use href="#home"/></svg></button>
      <button aria-label="Design library"><svg><use href="#books"/></svg></button>
      <button aria-label="File explorer"><svg><use href="#fold"/></svg></button>
      <button aria-label="View palette"><svg><use href="#palette"/></svg></button>
      <button aria-label="Appearances"><svg><use href="#ball"/></svg></button>
      <button aria-label="Custom properties"><svg><use href="#listwin"/></svg></button>
      <button aria-label="Recovery"><svg><use href="#sync"/></svg></button>
      <button aria-label="Forum"><svg><use href="#talk"/></svg></button>
    </nav>
    <p class="viewname">*Front</p>
    <div class="notice"><strong>Activate Windows</strong><span>Go to Settings to activate Windows.</span></div>
  </section>
</main>

<nav class="sheets" aria-label="Sheets">
  <div class="steps">
    <button aria-label="First"><svg viewBox="0 0 14 12"><path d="M3 1v10M11 1 5 6l6 5z" fill="#888" stroke="#888"/></svg></button>
    <button aria-label="Previous"><svg viewBox="0 0 14 12"><path d="M9 1 4 6l5 5z" fill="#888"/></svg></button>
    <button aria-label="Next"><svg viewBox="0 0 14 12"><path d="m5 1 5 5-5 5z" fill="#888"/></svg></button>
    <button aria-label="Last"><svg viewBox="0 0 14 12"><path d="M11 1v10M3 1l6 5-6 5z" fill="#888" stroke="#888"/></svg></button>
  </div>
  <button class="sheet on">Model</button><button class="sheet">3D Views</button><button class="sheet">Motion Study 1</button>
</nav>

<footer class="status">
  <span class="product">SOLIDWORKS Premium 2018 x64 Edition</span>
  <span class="under">Under Defined</span>
  <span class="editing">Editing Assembly</span>
  <span class="blank"></span>
  <button class="units">MMGS <svg viewBox="0 0 8 8"><path d="M1 6h6L4 2z" fill="#333"/></svg></button>
  <svg class="tag" viewBox="0 0 18 16"><path d="m2 5 3-3 8 1 4 6-4 6-5-2z" fill="#fff" stroke="#333" stroke-width="1.300"/><path d="m7 9 4-5M10 12l5-7M3 7l6 6" stroke="#333"/><circle cx="6" cy="5" r="1.500" fill="#fff" stroke="#333"/></svg>
</footer>

<footer class="taskbar">
  <button class="weather" aria-label="Weather"><svg viewBox="0 0 24 24"><circle cx="11" cy="12" r="10.500" fill="#8f9aa6"/><path d="M12 21a4 4 0 0 1 0-7 4.500 4.500 0 0 1 8 1 3.300 3.300 0 0 1 0 6z" fill="#eef2f5"/></svg></button>
  <div class="apps">
    <button class="app" aria-label="Start"><svg viewBox="0 0 24 24"><path d="M.5.500h11v11H.5zM12.500.500h11v11h-11zM.5 12.500h11v11H.5zM12.500 12.500h11v11h-11z" fill="url(#win)"/></svg></button>
    <button class="find"><svg viewBox="0 0 16 16"><circle cx="7" cy="7" r="5" fill="none" stroke="#fff" stroke-width="1.600"/><path d="m10.500 10.500 4 4" stroke="#fff" stroke-width="1.800"/></svg>Search</button>
    <button class="app" aria-label="Task view"><svg viewBox="0 0 24 24"><path d="M6 1h18v16H6z" fill="#f3f3f3"/><path d="M0 7h17v15H0z" fill="#666" fill-opacity=".85"/></svg></button>
    <button class="app" aria-label="Chat"><svg viewBox="0 0 24 24"><path d="M1 23V12a11.500 11.500 0 1 1 11.500 11z" fill="url(#chat)"/><path d="M6 8h9v9H6zM16 11l4-3v9l-4-3z" fill="#fff"/></svg></button>
    <button class="app" aria-label="Mail"><svg viewBox="0 0 24 24"><path d="M0 8 12 0l12 8v15H0z" fill="#0c62b8"/><path d="M3 6h18v8H3z" fill="#f2f2f2"/><path d="m0 7 12 8 12-8v16H0z" fill="#2fb3ee"/><path d="m12 15 12-8v16H20z" fill="#1685d8"/></svg></button>
    <button class="app" aria-label="Edge"><svg viewBox="0 0 24 24"><circle cx="12" cy="12" r="11.800" fill="#0f6fc6"/><path d="M.5 10C2 3 8 0 13 .2 20 .5 24 6 23.800 11c0 4-3 5.500-6 5.500-2 0-4-.8-3-2.500 2-4-1-7-5-7-4 0-7 1.500-9.300 3z" fill="url(#edge)"/><path d="M8.500 12c0 6 5 9 13 7-2 3-6 5-10 4.500C5 22 4 13 10 9c-1 1-1.500 2-1.500 3z" fill="#0b4f9a"/><path d="M10.500 12c1-3 4-2 4.500 0 0 1-1 2-.5 3-2 0-4-1-4-3z" fill="#1e2426"/></svg></button>
    <button class="app" aria-label="File Explorer"><svg viewBox="0 0 24 24"><path d="M0 2h9l2 3h13v17H0z" fill="#e3a51b"/><path d="M0 6h24v16H0z" fill="#fbd051"/><path d="M4 17c0-1 1-2 2-2h12c1 0 2 1 2 2v5H4z" fill="#1b7fd0"/><path d="M7 19h10v1H7z" fill="#0d5ea3"/></svg></button>
    <button class="app" aria-label="Opera"><svg viewBox="0 0 24 24"><ellipse cx="12" cy="12" rx="11" ry="11.500" fill="#e0152b"/><ellipse cx="12" cy="12" rx="4.600" ry="8" fill="#211f1f"/></svg></button>
    <span class="hole"></span>
    <button class="app" aria-label="Firefox"><svg viewBox="0 0 24 24"><path d="M2 6l2 2 2-5 3 3c3-1 5-4 5-6 4 3 5 5 6 7l2-1c4 9 0 17-9 18C3 24-2 15 2 6z" fill="url(#ff)"/><circle cx="12" cy="13" r="5.500" fill="#8a3fe0"/><path d="M6 10c3-1 5 0 7 1-2 1-3 1-4 3-2-1-3-2-3-4z" fill="#ff9a1e"/></svg></button>
    <button class="app active" aria-label="SOLIDWORKS 2018"><svg viewBox="0 0 26 26"><path d="m4 4 8-3.500 10 2V17l-8 3.500L4 17z" fill="#b9161c"/><path d="m4 4 8-3.500 10 2L14 6z" fill="#ef4a45"/><text x="4" y="15" class="swt">SW</text><text x="6" y="24" class="swy">2018</text></svg></button>
    <button class="app run" aria-label="SOLIDWORKS Visualize"><svg viewBox="0 0 24 24"><circle cx="14" cy="10" r="9.500" fill="#8d8d8d"/><path d="M13 4c5-1 9 2 8 7-3 1-7-2-8-7z" fill="#1d1d1d"/><path d="m1 13 5-2 6 2v8l-6 2-5-3z" fill="#dc2019"/><text x="2" y="20" class="swm">SW</text></svg></button>
  </div>
  <div class="tray">
    <button class="tr" aria-label="Hidden icons"><svg viewBox="0 0 16 16"><path d="m3 11 5-5 5 5" fill="none" stroke="#fff" stroke-width="1.600"/></svg></button>
    <button class="net" aria-label="Network, sound and battery"><svg viewBox="0 0 16 16"><g fill="none" stroke="#fff" stroke-width="1.400"><path d="M1 6.500c4-4 10-4 14 0M3.300 9c3-2.700 6.400-2.700 9.400 0M5.500 11.500c1.700-1.400 3.300-1.400 5 0"/></g><circle cx="8" cy="13.500" r="1.300" fill="#fff"/></svg><svg viewBox="0 0 16 16"><path d="M1 6h3l4-4v12l-4-4H1z" fill="none" stroke="#fff" stroke-width="1.200"/><path d="M10 6c1 1 1 3 0 4" fill="none" stroke="#fff"/><path d="M12 4c2 2 2 6 0 8M14 2.500c3 3 3 8 0 11" fill="none" stroke="#777"/></svg><svg viewBox="0 0 16 16"><rect x=".7" y="4" width="12.600" height="8" rx="1.500" fill="none" stroke="#fff" stroke-width="1.300"/><path d="M2.500 5.800h6v4.400h-6zM14 6.500h1.500v3H14z" fill="#fff"/></svg></button>
    <time class="clock">23:35<br>17/02/2023</time>
  </div>
</footer>
</body>
</html>
```

FILE: styles.css
```css
* { box-sizing: border-box; }
html, body { height: 100%; }
body {
  margin: 0;
  display: flex;
  flex-direction: column;
  overflow: hidden;
  background: #f7f7f7;
  color: #000;
  font: 11px/16px "Noto Sans", "Open Sans", sans-serif;
}
button {
  margin: 0;
  padding: 0;
  border: 0;
  background: none;
  color: inherit;
  font: inherit;
  display: flex;
  align-items: center;
  justify-content: center;
  white-space: nowrap;
}
svg { display: block; flex: none; width: 20px; height: 20px; }
.defs { position: absolute; width: 0; height: 0; }

/* Title bar */
.titlebar {
  flex: none;
  height: 31px;
  display: flex;
  align-items: center;
  border-bottom: 1px solid #808080;
}
.brand {
  align-self: flex-start;
  z-index: 2;
  flex: none;
  width: 145px;
  height: 35px;
  margin-left: 10px;
  padding-left: 5px;
  display: flex;
  align-items: center;
  border: 1px solid #808080;
  border-top: 0;
  background: linear-gradient(135deg, #fff 40%, #d6d6d6);
}
.brand-mark { width: 28px; height: 28px; align-self: flex-start; }
.brand-name { display: flex; color: #d8261c; padding: 3px 0 0 4px; }
.brand-name b { font: italic 700 16px/20px "Liberation Sans", sans-serif; }
.brand-name i { font: italic 300 16px/20px Roboto, sans-serif; }
.brand-arrow { width: 21px; height: 30px; border-right: 1px solid #999; }
.brand-arrow svg { width: 8px; height: 14px; }
.quick { display: flex; align-items: center; padding-left: 32px; }
.ic { width: 20px; height: 24px; }
.gap-r { margin-right: 5px; }
.drop { width: 19px; height: 24px; color: #333; }
.dim { width: 17px; color: #888; }
.drop svg, .tiny svg, .hd svg, .pickdrop svg { width: 8px; height: 8px; }
.tiny { width: 12px; height: 20px; color: #333; }
.picker { display: flex; height: 27px; border: 1px solid #888; margin-right: 3px; }
.pick { width: 25px; background: #b0b0b0; border-right: 1px solid #888; }
.pickdrop { width: 12px; color: #333; }
.doc-title { flex: 1; margin: 0; padding-top: 2px; font-size: 11px; line-height: 16px; font-weight: 400; text-align: center; }
.search {
  flex: none;
  width: 202px;
  height: 23px;
  margin: 0;
  padding: 0 0 0 5px;
  display: flex;
  align-items: center;
  border: 1px solid #111;
  background: #eef0f6;
}
.prompt { width: 16px; height: 16px; }
.search input { flex: 1; min-width: 0; border: 0; padding: 1px 4px 0; background: none; font: inherit; color: #666; }
.search input::placeholder { color: #666; opacity: 1; }
.winctl, .docctl { display: flex; align-items: center; }
.winctl { padding-left: 4px; color: #333; }
.cell { width: 26px; height: 24px; }
.cell svg { width: 14px; height: 14px; }
.cell .tall { height: 18px; }
.help { font-size: 18px; font-weight: 700; }

/* Command ribbon */
.ribbon {
  flex: none;
  height: 86px;
  padding-left: 2px;
  display: grid;
  grid-template-columns: 72px 71px 71px 40px 39px 46px 2px 66px 53px 46px 48px 72px 52px 56px 48px;
  border-right: 1px solid #808080;
}
.cmd { flex-direction: column; justify-content: flex-start; padding-top: 18px; line-height: 13px; text-align: center; }
.cmd svg { margin-bottom: 1px; }
.cmd:disabled { color: #b4b4b4; }
.rule { width: 1px; height: 78px; margin: 6px 0 0; background: #c0c0c0; }

/* Command tabs */
.tabrow { flex: none; height: 23px; display: flex; justify-content: space-between; background: #fff; border-top: 1px solid #808080; }
.tabs { display: grid; grid-template-columns: 67px 56px 56px 60px 88px 133px 73px 117px 101px 146px; }
.tabs button { background: #d3d3d3; color: #222; border-right: 1px solid #808080; border-bottom: 1px solid #808080; }
.tabs .on { background: #f7f7f7; border-bottom: 0; font-weight: 700; color: #333; }
.docctl { padding: 8px 6px 0 0; color: #999; }

/* Work area */
.work { flex: 1; min-height: 0; display: flex; }
.panel { position: relative; z-index: 1; flex: none; width: 254px; display: flex; flex-direction: column; border-right: 1px solid #808080; }
.grip { flex: none; height: 16px; margin: 2px 3px 4px 0; display: flex; align-items: center; justify-content: center; border: 1px solid #c8c8c8; border-width: 1px 0; }
.grip i, .handle i { width: 6px; height: 6px; border: 1px solid #888; border-radius: 50%; background: #ccc; }
.ptabs { flex: none; height: 26px; display: grid; grid-template-columns: repeat(5, 40px) 34px 16px; }
.ptabs button { background: #d3d3d3; border: 1px solid #808080; border-left: 0; }
.ptabs .on { background: #f7f7f7; border-bottom: 0; }
.ptabs .last { padding-left: 4px; border-right: 0; }
.ptabs .more { background: #f7f7f7; border: 0; }
.ptabs .more svg { width: 10px; height: 14px; }
.filter { flex: none; height: 26px; margin: 0 4px 1px 3px; padding-left: 1px; justify-content: flex-start; border: 1px solid #c0c0c0; }
.filter .fn { width: 20px; height: 20px; }
.filter .ct { width: 7px; height: 7px; margin-top: 6px; }
.treebox { flex: 1; min-height: 0; display: flex; overflow: hidden; }
.tree { flex: 1; min-width: 0; margin: 0; padding: 0; overflow: hidden; list-style: none; }
.tree li { position: relative; height: 22px; display: flex; align-items: center; gap: 5px; overflow: hidden; white-space: nowrap; }
.tree svg { width: 18px; height: 18px; }
.tree .l0 { padding-left: 3px; gap: 4px; }
.tree .l1 { padding-left: 25px; }
.tree .l2 { padding-left: 48px; }
.has::before, .open::before { content: ""; position: absolute; left: 8px; top: 6px; border: solid transparent; border-width: 4px 0 4px 5px; border-left-color: #666; }
.l2.has::before { left: 31px; }
.open::before { left: 6px; top: 9px; border-width: 5px 4px 0; border-color: #666 transparent transparent; }
.vbar { flex: none; width: 15px; padding: 17px 6px 0 7px; background: #efefef; }
.vbar i { display: block; height: 62px; background: #808080; }
.hbar { flex: none; height: 18px; padding: 8px 0 0 16px; background: #efefef; }
.hbar i { display: block; width: 74px; height: 2px; background: #808080; }
.handle { position: absolute; left: 253px; top: 242px; width: 9px; height: 39px; background: #f7f7f7; border: 1px solid #808080; border-left: 0; }

.viewport { position: relative; flex: 1; min-width: 0; background: #fff; }
.model { width: 100%; height: 100%; }
.axis { font: 10px "Liberation Sans", sans-serif; }
.hud { position: absolute; top: 3px; left: 0; right: 0; padding-right: 4px; display: flex; justify-content: center; }
.hud button { width: 26px; height: 24px; }
.hud .hd { width: 14px; color: #888; }
.strip { position: absolute; top: 29px; right: 0; width: 26px; border: 1px solid #808080; border-width: 1px 0 0 1px; }
.strip button { width: 25px; height: 24px; background: #d3d3d3; border-bottom: 1px solid #808080; }
.strip .on { background: #f7f7f7; }
.viewname { position: absolute; left: 12px; bottom: 2px; margin: 0; font-size: 11px; line-height: 16px; font-weight: 700; }
.notice { position: absolute; right: 56px; bottom: 0; width: 237px; display: flex; flex-direction: column; color: #b4b4b4; white-space: nowrap; font-size: 14px; line-height: 20px; }
.notice strong { font-size: 19px; line-height: 24px; font-weight: 400; }

/* Sheet tabs */
.sheets { flex: none; height: 16px; display: flex; border: 1px solid #808080; border-width: 1px 1px 1px 0; }
.steps { width: 67px; padding-left: 2px; display: grid; grid-template-columns: repeat(4, 16px); background: #b8b8b8; border-right: 1px solid #808080; }
.steps button { border-right: 1px solid #999; }
.steps svg { width: 12px; height: 10px; }
.sheet { padding: 0 11px; background: #d3d3d3; border-right: 1px solid #808080; line-height: 14px; }
.sheet:last-child { padding: 0 16px 0 9px; font-size: 11px; }
.sheets .on { padding: 0 11px; background: #f7f7f7; font-weight: 700; }

/* Status bar */
.status { flex: none; height: 18px; display: flex; align-items: center; padding: 1px 2px 0 1px; }
.product { flex: 1; }
.under, .editing, .blank { border-right: 1px solid #c8c8c8; }
.under { padding-right: 7px; }
.editing { margin-left: 6px; padding: 0 7px 0 3px; border-left: 1px solid #c8c8c8; }
.blank { width: 15px; height: 16px; }
.units { gap: 17px; margin: 0 64px 0 32px; }
.units svg { width: 8px; height: 8px; }
.tag { width: 18px; height: 16px; }

/* Desktop taskbar */
.taskbar {
  flex: none;
  height: 48px;
  display: grid;
  grid-template-columns: 1fr auto 1fr;
  align-items: center;
  color: #fff;
  font-size: 12px;
  background: linear-gradient(90deg, #1b232a, #1e2629 40%, #24211f 55%, #231f1e 65%, #1c2223 80%, #1d2422);
}
.weather { width: 46px; height: 48px; }
.weather svg, .app svg { width: 24px; height: 24px; }
.apps { display: flex; align-items: center; }
.app, .hole { position: relative; width: 44px; height: 40px; }
.find { width: 99px; height: 32px; margin: 0 4px; gap: 5px; border-radius: 16px; background: #2d3336; }
.find svg { width: 16px; height: 16px; }
.active { width: 40px; margin: 0 2px; border-radius: 4px; background: #2f3536; }
.active svg { width: 26px; height: 26px; }
.active::after, .run::after { content: ""; position: absolute; bottom: 0; width: 16px; height: 3px; border-radius: 2px; background: #a9c9dc; }
.run::after { width: 6px; background: #999; }
.swt { font: 700 10px "Liberation Sans", sans-serif; fill: #fff; }
.swy { font: 700 8px "Liberation Sans", sans-serif; fill: #fff; }
.swm { font: 700 6px "Liberation Sans", sans-serif; fill: #fff; }
.tray { display: flex; align-items: center; justify-content: flex-end; padding-right: 19px; }
.tr { width: 24px; height: 32px; }
.tray svg { width: 16px; height: 16px; }
.net { height: 32px; gap: 8px; padding: 0 16px 0 12px; }
.clock { font-size: 12px; line-height: 16px; text-align: right; }
```
